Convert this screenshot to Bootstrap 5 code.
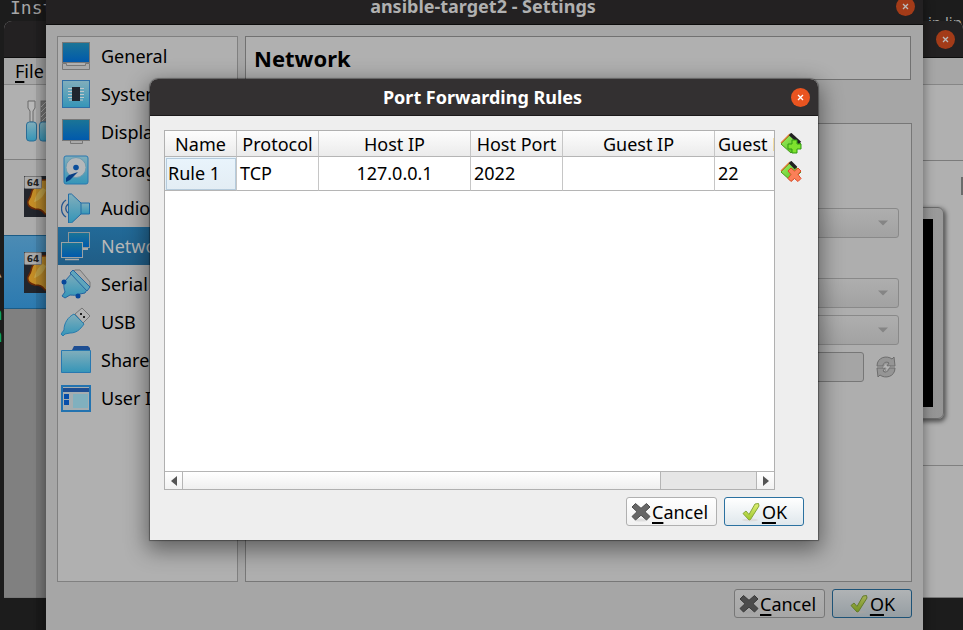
<!DOCTYPE html>
<html lang="en">
<head>
<meta charset="utf-8">
<meta name="viewport" content="width=device-width, initial-scale=1">
<title>Port Forwarding Rules</title>
<link href="https://cdn.jsdelivr.net/npm/bootstrap@5.3.0/dist/css/bootstrap.min.css" rel="stylesheet">
<style>
html, body { height: 100%; }
body { background: #1c1c1c; font-family: "Noto Sans", sans-serif; font-size: 18px; line-height: 24px; color: #000; }
.desktop { height: 100%; min-height: 100%; }
.term { font-family: "DejaVu Sans Mono", monospace; font-size: 18px; line-height: 22px; color: #a6a6a6; white-space: pre; }
.term-top { left: 10px; top: -3px; }
.term-right { right: 1px; top: 11px; font-family: "Noto Sans", sans-serif; font-size: 15px; }
.term-left { left: -8px; top: 259px; }
.term-green { color: #0fa06a; }

/* windows */
.win { position: absolute; border-radius: 8px 8px 0 0; }
.win-title { height: 37px; flex: none; background: #232122; border-bottom: 1px solid #0d0d0d; border-radius: 8px 8px 0 0; color: #b0b0b0; font-weight: 700; padding: 0 8px; }
.win-close { width: 19px; height: 19px; border: 0; border-radius: 50%; padding: 0; background: #a33b18; color: #bbb; }
.win-close svg { width: 19px; height: 19px; display: block; }
.gap-win { gap: 7px; }

.manager { left: 4px; right: 0; top: 21px; bottom: 32px; background: #b0b0b0; border-bottom: 1px solid #777; }
.manager-menu { height: 27px; flex: none; background: #a6a6a6; border-bottom: 1px solid #868686; padding: 0 11px; }
.manager-menu a { color: #000; }
.vm-column { width: 300px; background: #808080; }
.vm-tools { height: 75px; background: #b0b0b0; border-bottom: 1px solid #808080; padding: 14px 20px; }
.vm-item { height: 75px; padding: 16px 20px; background: #acacac; }
.vm-item.current { height: 74px; background: linear-gradient(#4b8bb4, #2c7ab0); border-top: 1px solid #1c5c86; border-bottom: 1px solid #1c5c86; }
.vm-tool-line { height: 76px; flex: none; border-bottom: 1px solid #7b7b7b; }
.vm-preview { height: 305px; border-bottom: 1px solid #808080; padding: 46px 19px; }
.monitor { width: 280px; height: 212px; border: 1px solid #6a6a6a; border-radius: 6px; padding: 11px 10px; background: linear-gradient(115deg, #a8a8a8, #959595); box-shadow: 1px 2px 4px 1px #555; }
.monitor-screen { background: #000; height: 188px; }
.scroll-mark { width: 2px; height: 18px; right: 0; top: 92px; background: #6b6b6b; }

.settings { left: 46px; right: 40px; top: -12px; bottom: -12px; background: #a6a6a6; box-shadow: -10px 0 0 rgba(0,0,0,.09), 0 4px 12px rgba(0,0,0,.45); }
.settings-body { padding: 11px 11px 24px; min-height: 0; }
.settings-nav { width: 181px; flex: none; border: 1px solid #808080; background: #b0b0b0; }
.settings-nav a { height: 38px; padding: 0 3px; gap: 10px; color: #000; white-space: nowrap; overflow: hidden; }
.settings-nav a.current { background: linear-gradient(#226a98, #205d86); color: #b8b8b8; }
.settings-nav svg { width: 30px; height: 30px; flex: none; }
.page-head { height: 44px; flex: none; border: 1px solid #717171; background: #b0b0b0; padding: 1px 8px 0; font-size: 22px; font-weight: 700; margin: 0 1px 43px 0; }
.page-frame { border: 1px solid #777; background: #aeaeae; padding: 84px 12px 0; }
.page-frame select, .page-frame input { height: 30px; border: 1px solid #898989; border-radius: 3px; width: 100%; padding: 0 26px 0 6px; }
.page-frame select { appearance: none; background: linear-gradient(#aeaeae, #a2a2a2); }
.page-frame input { background: #a5a5a5; border-color: #777; padding: 0 6px; }
.combo { position: relative; margin-bottom: 7px; }
.combo-wide { margin-bottom: 40px; }
.combo svg { position: absolute; right: 11px; top: 12px; width: 10px; height: 6px; }
.mac-row { gap: 10px; padding-right: 1px; }
.refresh { width: 24px; height: 24px; }

.push { height: 29px; border: 1px solid #b0b0b0; border-radius: 3px; background: linear-gradient(#fff, #f1f1f1); color: #000; padding: 0 4px; font-size: 18px; line-height: 24px; gap: 1px; }
.push svg { width: 20px; height: 20px; flex: none; }
.push-cancel { width: 91px; }
.push-ok { width: 80px; border-color: #2b71a0; background: linear-gradient(#fff, #dfe7ec); }
.key { text-decoration: underline; text-decoration-thickness: 2px; text-underline-offset: 3px; text-decoration-skip-ink: none; }
.dim .push { background: linear-gradient(#b0b0b0, #a7a7a7); border-color: #777; }
.dim .push-ok { background: linear-gradient(#b0b3b5, #969ea3); border-color: #1e5377; }
.dim .push svg { filter: brightness(.74); }

.rules { left: 150px; right: 145px; top: 79px; bottom: 90px; background: #eee; box-shadow: 0 0 1px 1px rgba(0,0,0,.35), 0 7px 22px 3px rgba(0,0,0,.45); }
.rules .win-title { background: #333031; border-bottom-color: #1b191a; color: #fff; }
.rules .win-close { background: #e95420; color: #fff; }
.rules-body { padding: 14px; min-height: 0; }
.rules-main { gap: 5px; }
.rules-frame { border: 1px solid #b0b0b0; background: #fff; min-width: 0; overflow: hidden; }
.rules-table { table-layout: fixed; width: 646px; border-collapse: separate; border-spacing: 0; }
.rules-table th, .rules-table td { border-right: 1px solid #c6c6c6; border-bottom: 1px solid #b5b5b5; padding: 0 3px; white-space: nowrap; overflow: hidden; }
.rules-table th { height: 26px; font-weight: 400; text-align: center; background: linear-gradient(#fdfdfd, #ebebeb); }
.rules-table td { height: 34px; padding-bottom: 2px; }
.rules-table td.current { background: linear-gradient(#e9f4fc, #e3edf4); outline: 1px solid #b5cbdc; outline-offset: -2px; }
.c-name { width: 72px; } .c-proto { width: 82px; } .c-ip { width: 152px; } .c-port { width: 92px; } .c-last { width: 96px; }
.rules-tools { width: 24px; flex: none; gap: 4px; padding-top: 2px; }
.rules-tools button { border: 0; background: none; padding: 0; height: 24px; }
.rules-tools svg { width: 22px; height: 22px; display: block; }
.hscroll { height: 18px; flex: none; background: #e6e6e6; border-top: 1px solid #b5b5b5; }
.hscroll button { width: 17px; border: 0; padding: 0; background: linear-gradient(#fff, #f2f2f2); }
.hscroll .scroll-next { width: 18px; border-left: 1px solid #b5b5b5; }
.hscroll svg { display: block; width: 8px; height: 10px; margin: 0 auto; }
.hscroll-handle { width: 83.4%; background: linear-gradient(#fff, #efefef); border: solid #b5b5b5; border-width: 0 1px; }
.paint-defs { position: absolute; width: 0; height: 0; }
</style>
<script src="https://cdn.jsdelivr.net/npm/bootstrap@5.3.0/dist/js/bootstrap.bundle.min.js"></script>
</head>
<body>
<svg class="paint-defs" aria-hidden="true">
  <defs>
    <linearGradient id="scr" x1="0" y1="0" x2="0" y2="1"><stop offset="0" stop-color="#1b7596"/><stop offset="1" stop-color="#0059ad"/></linearGradient>
    <linearGradient id="aqua" x1="0" y1="0" x2="0" y2="1"><stop offset="0" stop-color="#82aebb"/><stop offset="1" stop-color="#3495b8"/></linearGradient>
    <linearGradient id="grn" x1="0" y1="0" x2="1" y2="1"><stop offset="0" stop-color="#a6f26a"/><stop offset="1" stop-color="#45b80e"/></linearGradient>
    <linearGradient id="tickfill" x1="0" y1="0" x2="0" y2="1"><stop offset="0" stop-color="#e0f076"/><stop offset="1" stop-color="#9cc72c"/></linearGradient>
    <linearGradient id="gold" x1="0" y1="0" x2="1" y2="0"><stop offset="0" stop-color="#c98d22"/><stop offset=".35" stop-color="#b98a2c"/><stop offset="1" stop-color="#8a5a14"/></linearGradient>
  </defs>
  <symbol id="x" viewBox="0 0 19 19"><path d="M7 7l5 5M12 7l-5 5" stroke="currentColor" stroke-width="1.3" fill="none"/></symbol>
  <symbol id="cross" viewBox="0 0 20 20"><ellipse cx="10" cy="18" rx="7" ry="1.6" fill="#ddd"/><path d="M4.500 1.500L10 6.300 15.500 1.500 19 5l-5 4.700 5 4.800-3.500 3.500L10 13.200 4.500 18 1 14.500 6 9.700 1 5z" fill="#666" stroke="#4d4d4d"/></symbol>
  <symbol id="tick" viewBox="0 0 20 20"><ellipse cx="9" cy="18" rx="8" ry="1.500" fill="#dcdcdc"/><path d="M2 11.500l3-2.500 3 3.500L14 2l3.500-.5L18 4 9.500 17.500 8 18z" fill="url(#tickfill)" stroke="#86a63a"/></symbol>
  <symbol id="down" viewBox="0 0 10 6"><path d="M0 .5h10L5 5.500z" fill="#858585"/></symbol>
  <symbol id="vm" viewBox="0 0 41 41"><path fill="#22252c" d="M0 0h41v41H0z"/><path d="M17 4c-4 5-8 8-9 11-1 5-2 7-4 10-1 4 2 7 7 8 5 0 7 1 10 5h20V3z" fill="url(#gold)" stroke="#6b2a08" stroke-width="1.500"/><path d="M19 12c-5 3-7 7-9 14 5-1 10-6 12-12z" fill="#c7b25e" opacity=".6"/><rect x=".5" y=".5" width="17" height="12" rx="1" fill="#aaa" stroke="#777"/><text x="9" y="10" text-anchor="middle" font-family="DejaVu Sans" font-weight="700" font-size="9" fill="#222">64</text></symbol>
</svg>

<main class="desktop position-relative overflow-hidden">
  <div class="term term-top position-absolute">Inst</div>
  <div class="term term-right position-absolute">in lin</div>
  <div class="term term-left position-absolute">\

<span class="term-green">n
n</span></div>

  <section class="win manager d-flex flex-column" aria-label="Manager">
    <div class="win-title d-flex align-items-center justify-content-end">
      <button class="win-close" type="button" aria-label="Close manager"><svg><use href="#x"/></svg></button>
    </div>
    <nav class="manager-menu d-flex align-items-center"><a class="text-decoration-none" href="#"><span class="key">F</span>ile</a></nav>
    <div class="d-flex flex-grow-1 overflow-hidden">
      <div class="vm-column flex-shrink-0">
        <div class="vm-tools">
          <svg width="32" height="46" viewBox="0 0 32 46" aria-hidden="true">
            <path d="M4 2h7v7L9 12v11H6V12L4 9z" fill="#b8b8b8" stroke="#696969"/>
            <rect x="17" y="2" width="7" height="21" fill="#777" stroke="#696969"/><path d="M17 8l6-6M17 13l7-7M17 18l7-7M18 22l6-6" stroke="#aaa"/>
            <rect x="2.500" y="23" width="10" height="19" rx="3" fill="url(#aqua)" stroke="#2b6d96"/>
            <rect x="15.500" y="23" width="10" height="19" rx="3" fill="url(#aqua)" stroke="#2b6d96"/>
          </svg>
        </div>
        <div class="vm-item"><svg width="41" height="41" class="d-block"><use href="#vm"/></svg></div>
        <div class="vm-item current"><svg width="41" height="41" class="d-block"><use href="#vm"/></svg></div>
      </div>
      <div class="flex-grow-1 d-flex flex-column position-relative">
        <div class="vm-tool-line"></div>
        <div class="vm-preview d-flex justify-content-end">
          <div class="monitor"><div class="monitor-screen"></div></div>
        </div>
        <div class="scroll-mark position-absolute"></div>
      </div>
    </div>
  </section>

  <section class="win settings dim d-flex flex-column" aria-label="Settings">
    <div class="win-title d-flex align-items-center">
      <div class="flex-grow-1 text-center ps-3">ansible-target2 - Settings</div>
      <button class="win-close" type="button" aria-label="Close settings"><svg><use href="#x"/></svg></button>
    </div>
    <div class="settings-body flex-grow-1 d-flex flex-column gap-win">
      <div class="flex-grow-1 d-flex gap-win">
        <nav class="settings-nav">
          <a href="#" class="d-flex align-items-center text-decoration-none"><svg viewBox="0 0 30 30"><rect x="1.500" y="1.500" width="27" height="20" fill="url(#scr)" stroke="#777"/><path d="M1.500 22.500h4v2h19v-2h4v6h-27z" fill="#aaa" stroke="#777"/></svg>General</a>
          <a href="#" class="d-flex align-items-center text-decoration-none"><svg viewBox="0 0 30 30"><rect x="1.500" y="1.500" width="27" height="27" fill="url(#aqua)" stroke="#2f6ea5"/><path d="M7 9.500h16M7 12.500h16M7 15.500h16M7 18.500h16M8 21h14" stroke="#c0c6c8"/><rect x="11" y="8" width="8" height="14" fill="#20252e"/></svg>System</a>
          <a href="#" class="d-flex align-items-center text-decoration-none"><svg viewBox="0 0 30 30"><path d="M5.500 23.500h4v3h12v-3h4" fill="#aaa" stroke="#777"/><rect x="1.500" y="2.500" width="27" height="21" fill="url(#scr)" stroke="#777"/></svg>Display</a>
          <a href="#" class="d-flex align-items-center text-decoration-none"><svg viewBox="0 0 30 30"><rect x="3" y="1" width="24" height="28" rx="2" fill="url(#aqua)" stroke="#2878b0"/><circle cx="15" cy="12.500" r="10" fill="#b5b8ba" stroke="#6d9bb0"/><circle cx="15" cy="12.500" r="2.800" fill="#0b4f9c"/><path d="M17 17L9 25l-4 2v-4l3-3z" fill="#073e85"/></svg>Storage</a>
          <a href="#" class="d-flex align-items-center text-decoration-none"><svg viewBox="0 0 30 30"><path d="M19 10h9.500v11H19z" fill="url(#aqua)" stroke="#226ca5"/><path d="M7.500 1h3L20 10v11l-9.500 9h-3V1z" fill="url(#aqua)" stroke="#226ca5"/><path d="M5 7C-1 11-1 20 5 24M7 11c-3 3-3 6 0 9" stroke="#24568f" stroke-width="1.300" fill="none"/></svg>Audio</a>
          <a href="#" class="d-flex align-items-center text-decoration-none current"><svg viewBox="0 0 30 30"><rect x="7.500" y="1.500" width="21" height="15" fill="url(#scr)" stroke="#8f9598"/><path d="M22 18h5" stroke="#aaa" stroke-width="2"/><rect x=".5" y="11.500" width="21" height="15" fill="url(#scr)" stroke="#9ca2a4"/><path d="M4 28.500h14" stroke="#aaa" stroke-width="1.500"/></svg>Network</a>
          <a href="#" class="d-flex align-items-center text-decoration-none"><svg viewBox="0 0 30 30"><path d="M14 1h5l10 12v5l-4 2L10 4z" fill="#aaa" stroke="#777"/><path d="M4 12L12 3l15 16-3 5-5 1c-4 2-7 1-10 1l-5 3-3-2 3-4c-1-4-2-7 0-11z" fill="url(#aqua)" stroke="#2564a0"/><path d="M9 4l3-3 17 17-3 4z" fill="#5fa5bc" stroke="#2564a0"/><circle cx="3" cy="13" r="2.500" fill="#07469a"/><circle cx="17" cy="27" r="2.500" fill="#07469a"/></svg>Serial Ports</a>
          <a href="#" class="d-flex align-items-center text-decoration-none"><svg viewBox="0 0 30 30"><path d="M14 7l7-6 8 8-7 7z" fill="#b3b3b3" stroke="#777"/><path d="M19 6h2v2h-2zM22 9h2v2h-2z" fill="#222"/><path d="M13 7l10 10c-4 6-8 9-14 9l-5 1-2 2-2-2 3-4c0-7 4-13 10-16z" fill="url(#aqua)" stroke="#287bad"/></svg>USB</a>
          <a href="#" class="d-flex align-items-center text-decoration-none"><svg viewBox="0 0 30 30"><path d="M11 5l2-4h14l2 2v5H11z" fill="#1e4e92"/><path d="M.5 5.500h29v22H.5z" fill="url(#aqua)" stroke="#2878b0"/></svg>Shared Folders</a>
          <a href="#" class="d-flex align-items-center text-decoration-none"><svg viewBox="0 0 30 30"><rect x="1" y="3" width="28" height="25" fill="#a5adb0" stroke="#2373b0" stroke-width="2"/><path d="M2 5h26v4H2z" fill="#1e4e92"/><path d="M3 11h5v5H3zM3 17h5v5H3z" fill="#064eaa"/><path d="M12 11h15v14H12z" fill="#80b0be"/></svg>User Interface</a>
        </nav>
        <div class="flex-grow-1 d-flex flex-column">
          <h1 class="page-head d-flex align-items-center">Network</h1>
          <form class="page-frame flex-grow-1">
            <div class="combo combo-wide"><select disabled aria-label="Attached to"><option></option></select><svg><use href="#down"/></svg></div>
            <div class="combo"><select disabled aria-label="Adapter type"><option></option></select><svg><use href="#down"/></svg></div>
            <div class="combo"><select disabled aria-label="Promiscuous mode"><option></option></select><svg><use href="#down"/></svg></div>
            <div class="mac-row d-flex align-items-center">
              <input type="text" disabled aria-label="MAC address">
              <button type="button" class="refresh border-0 bg-transparent p-0 flex-shrink-0" disabled aria-label="Refresh"><svg width="24" height="24" viewBox="0 0 24 24" class="d-block"><path d="M3 11C3 2 13 0 18 4l2-2 1 9h-8l2-3c-3-2-6 0-6 3zM21 13c0 9-10 11-15 7l-2 2-1-9h8l-2 3c3 2 6 0 6-3z" fill="#959595" stroke="#6d6d6d"/><path d="M13 7l-5 6h4l-1 5 6-7h-4z" fill="#b5b5b5" stroke="#777" stroke-width=".6"/></svg></button>
            </div>
          </form>
        </div>
      </div>
      <div class="d-flex justify-content-end gap-win">
        <button type="button" class="push push-cancel d-flex align-items-center"><svg><use href="#cross"/></svg><span><span class="key">C</span>ancel</span></button>
        <button type="button" class="push push-ok d-flex align-items-center justify-content-center"><svg><use href="#tick"/></svg><span><span class="key">O</span>K</span></button>
      </div>
    </div>
  </section>

  <section class="win rules d-flex flex-column" role="dialog" aria-labelledby="rules-title">
    <div class="win-title d-flex align-items-center">
      <div class="flex-grow-1 text-center ps-3" id="rules-title">Port Forwarding Rules</div>
      <button class="win-close" type="button" aria-label="Close"><svg><use href="#x"/></svg></button>
    </div>
    <div class="rules-body flex-grow-1 d-flex flex-column gap-win">
      <div class="rules-main flex-grow-1 d-flex overflow-hidden">
        <div class="rules-frame flex-grow-1 d-flex flex-column">
          <div class="flex-grow-1 overflow-hidden">
            <table class="rules-table">
              <thead><tr><th class="c-name">Name</th><th class="c-proto">Protocol</th><th class="c-ip">Host IP</th><th class="c-port">Host Port</th><th class="c-ip">Guest IP</th><th class="c-last">Guest Port</th></tr></thead>
              <tbody><tr><td class="current">Rule 1</td><td>TCP</td><td class="text-center">127.0.0.1</td><td>2022</td><td></td><td>22</td></tr></tbody>
            </table>
          </div>
          <div class="hscroll d-flex">
            <button type="button" aria-label="Scroll left"><svg viewBox="0 0 8 10"><path d="M7 0v10L1 5z" fill="#555"/></svg></button>
            <div class="flex-grow-1 d-flex"><div class="hscroll-handle"></div></div>
            <button type="button" class="scroll-next" aria-label="Scroll right"><svg viewBox="0 0 8 10"><path d="M1 0v10l6-5z" fill="#555"/></svg></button>
          </div>
        </div>
        <div class="rules-tools d-flex flex-column">
          <button type="button" aria-label="Add rule"><svg viewBox="0 0 22 22"><path d="M1 11L11 1l10 10-10 9z" fill="url(#grn)" stroke="#479a1b"/><path d="M1 10L10 1" stroke="#e08038" stroke-width="1.500"/><path d="M10 1l10 9" stroke="#222" stroke-width="3.500"/><path d="M12 7h5v4h4v5h-4v4h-5v-4H8v-5h4z" fill="#7ee22e" stroke="#319a12"/></svg></button>
          <button type="button" aria-label="Remove rule"><svg viewBox="0 0 22 22"><path d="M1 11L11 1l10 10-10 9z" fill="url(#grn)" stroke="#479a1b"/><path d="M1 10L10 1" stroke="#e08038" stroke-width="1.500"/><path d="M10 1l6 6" stroke="#222" stroke-width="3.500"/><path d="M11 7l3.500 3L18 7l3 3-3 3.500 3 4-3 3-3.500-3-3.500 3-3-3 3-4L8 10z" fill="#fb8058" stroke="#df4a2a"/></svg></button>
        </div>
      </div>
      <div class="d-flex justify-content-end gap-win">
        <button type="button" class="push push-cancel d-flex align-items-center"><svg><use href="#cross"/></svg><span><span class="key">C</span>ancel</span></button>
        <button type="button" class="push push-ok d-flex align-items-center justify-content-center"><svg><use href="#tick"/></svg><span><span class="key">O</span>K</span></button>
      </div>
    </div>
  </section>
</main>
</body>
</html>
